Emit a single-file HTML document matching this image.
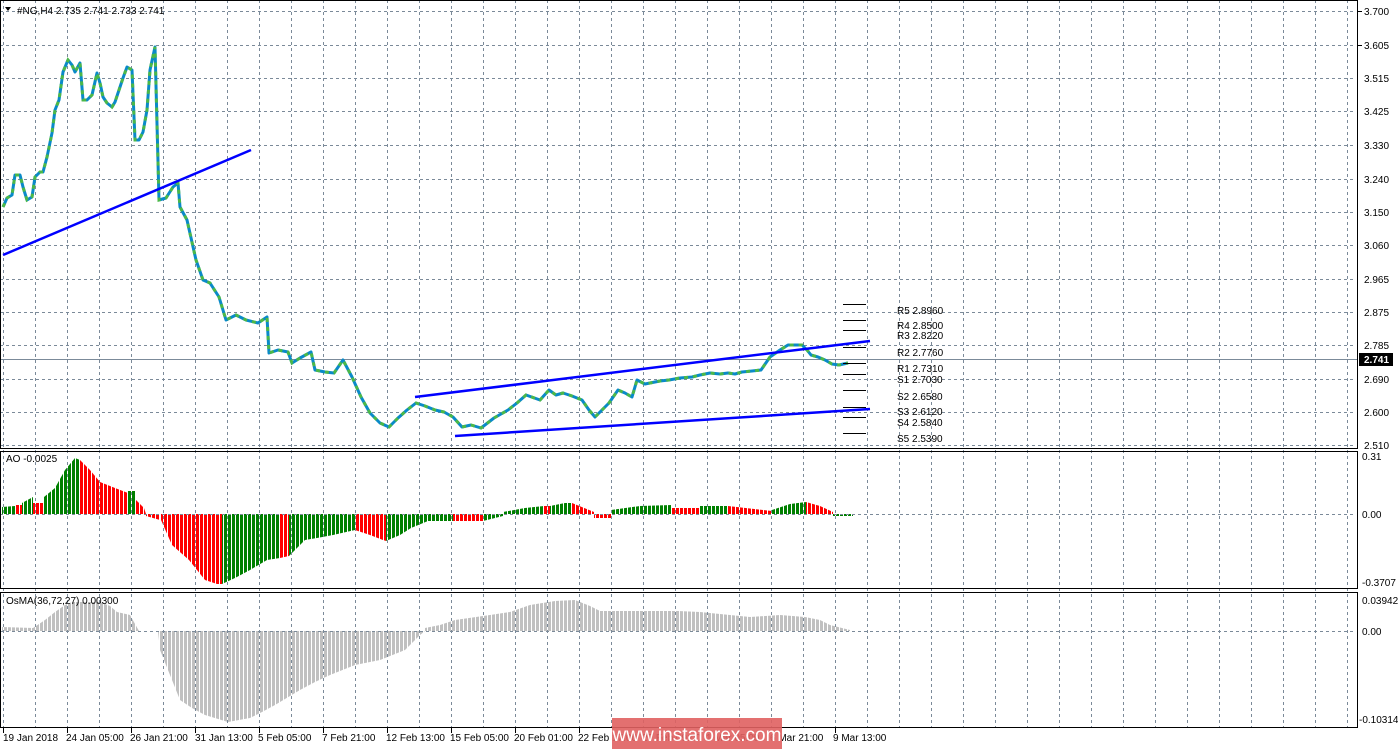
<!DOCTYPE html>
<html><head><meta charset="utf-8"><style>
html,body{margin:0;padding:0;background:#fff;}
svg{display:block;font-family:"Liberation Sans",sans-serif;}
</style></head><body>
<svg width="1398" height="749" viewBox="0 0 1398 749" xmlns="http://www.w3.org/2000/svg">
<defs>
<pattern id="vg" patternUnits="userSpaceOnUse" width="32" height="6" x="0" y="0"><rect x="3" y="0" width="1" height="3" fill="#7b8a99"/></pattern>
<pattern id="st" patternUnits="userSpaceOnUse" width="4" height="10"><rect x="3" y="0" width="1" height="10" fill="#fff"/></pattern>
</defs>
<rect width="1398" height="749" fill="#fff"/>

<g>
<polygon fill="#008000" points="2,514 2,507 15,506 15,514"/>
<polygon fill="#ff0000" points="15,514 15,505 22,505 22,514"/>
<polygon fill="#008000" points="22,514 22,503 33,497 33,514"/>
<polygon fill="#ff0000" points="33,514 33,503 44,503 44,514"/>
<polygon fill="#008000" points="44,514 44,497 55,488 65,470 75,458 80,460 80,514"/>
<polygon fill="#ff0000" points="80,514 80,460 90,470 100,482 115,488 128,493 128,514"/>
<polygon fill="#008000" points="128,514 128,491 136,491 136,514"/>
<polygon fill="#ff0000" points="136,514 136,500 144,508 146,514"/>
<polygon fill="#ff0000" points="146,514 146,516 160,520 160,514"/>
<polygon fill="#ff0000" points="161,514 161,520 172,545 189,560 205,580 217,584 222,584 222,514"/>
<polygon fill="#008000" points="222,514 222,584 235,578 250,570 267,560 280,558 280,514"/>
<polygon fill="#ff0000" points="280,514 280,558 289,556 289,514"/>
<polygon fill="#008000" points="289,514 289,556 295,550 305,540 317,538 333,535 355,530 355,514"/>
<polygon fill="#ff0000" points="355,514 355,530 370,535 383,540 386,541 386,514"/>
<polygon fill="#008000" points="386,514 386,541 400,535 411,528 428,521 453,521 453,514"/>
<polygon fill="#ff0000" points="453,514 453,521 483,521 483,514"/>
<polygon fill="#008000" points="483,514 483,521 503,516 503,514"/>
<polygon fill="#008000" points="503,514 503,512 525,508 544,506 544,514"/>
<polygon fill="#ff0000" points="544,514 544,506 550,506 550,514"/>
<polygon fill="#008000" points="550,514 550,506 565,503 572,503 572,514"/>
<polygon fill="#ff0000" points="572,514 572,503 594,512 594,514"/>
<polygon fill="#ff0000" points="594,514 594,518 611,518 611,514"/>
<polygon fill="#008000" points="611,514 611,510 640,506 672,505 672,514"/>
<polygon fill="#ff0000" points="672,514 672,508 700,508 700,514"/>
<polygon fill="#008000" points="700,514 700,506 728,506 728,514"/>
<polygon fill="#ff0000" points="728,514 728,506 772,511 772,514"/>
<polygon fill="#008000" points="772,514 772,510 790,504 806,502 806,514"/>
<polygon fill="#ff0000" points="806,514 806,502 820,506 833,512 833,514"/>
<polygon fill="#008000" points="833,514 833,516 853,516 853,514"/>
</g>
<polygon fill="#c0c0c0" points="2,631 2,627 33,628 45,620 55,612 65,605 72,602 100,602 110,606 117,612 130,615 139,631 158,631 160,650 172,680 180,700 192,708 205,715 228,722 250,718 262,712 275,705 300,690 315,682 330,675 355,665 380,660 405,650 420,635 425,631 425,628 440,625 455,620 490,615 510,612 530,605 555,601 575,600 590,606 600,611 650,611 678,611 700,612 720,614 750,617 780,615 805,617 820,620 830,625 850,630 850,631"/>
<rect x="0" y="452" width="858" height="136" fill="url(#st)"/>
<rect x="0" y="593" width="858" height="134" fill="url(#st)"/>

<rect x="0" y="0" width="1356" height="728" fill="url(#vg)"/>
<g stroke="#7b8a99" stroke-width="1" stroke-dasharray="3,3">
<line x1="0" x2="1356" y1="11.5" y2="11.5"/><line x1="0" x2="1356" y1="45.5" y2="45.5"/>
<line x1="0" x2="1356" y1="78.5" y2="78.5"/><line x1="0" x2="1356" y1="111.5" y2="111.5"/>
<line x1="0" x2="1356" y1="145.5" y2="145.5"/><line x1="0" x2="1356" y1="179.5" y2="179.5"/>
<line x1="0" x2="1356" y1="212.5" y2="212.5"/><line x1="0" x2="1356" y1="245.5" y2="245.5"/>
<line x1="0" x2="1356" y1="279.5" y2="279.5"/><line x1="0" x2="1356" y1="312.5" y2="312.5"/>
<line x1="0" x2="1356" y1="345.5" y2="345.5"/><line x1="0" x2="1356" y1="379.5" y2="379.5"/>
<line x1="0" x2="1356" y1="412.5" y2="412.5"/><line x1="0" x2="1356" y1="445.5" y2="445.5"/>
<line x1="0" x2="1356" y1="514.5" y2="514.5"/><line x1="0" x2="1356" y1="631.5" y2="631.5"/>
</g>
<line x1="0" x2="1358" y1="359.5" y2="359.5" stroke="#7b8a99"/>

<polyline fill="none" stroke="#0a8ac8" stroke-width="3" stroke-linejoin="round" points="3,207 7,198 12,195 15,175 20,175 23,187 27,200 32,197 35,177 40,172 43,172 47,157 52,133 55,110 59,100 63,72 68,60 72,65 75,72 80,63 83,100 87,100 92,95 97,73 100,83 103,97 107,103 112,107 115,102 119,90 123,78 127,67 132,70 135,140 139,140 143,132 147,110 150,70 155,47 159,200 166,198 173,187 178,183 180,207 187,220 196,260 203,280 210,283 219,297 226,320 236,315 246,320 258,323 267,317 269,353 278,350 288,352 292,363 300,358 311,352 315,370 325,372 334,373 343,360 352,377 361,397 370,413 380,423 389,427 398,418 407,410 416,403 425,406 435,410 444,412 453,417 462,427 471,425 481,428 494,418 508,410 517,403 526,395 540,400 549,390 556,395 563,393 572,396 582,400 589,410 595,417 602,410 609,403 618,390 625,393 632,397 637,380 645,384 650,383 660,381 669,380 680,378 692,377 700,375 710,373 720,374 728,373 735,374 742,372 752,371 761,370 770,357 780,350 788,345 795,345 802,345 807,350 811,355 818,357 825,360 832,364 839,365 848,363"/>
<polyline fill="none" stroke="#4cb848" stroke-width="3" stroke-dasharray="4,5" points="3,207 7,198 12,195 15,175 20,175 23,187 27,200 32,197 35,177 40,172 43,172 47,157 52,133 55,110 59,100 63,72 68,60 72,65 75,72 80,63 83,100 87,100 92,95 97,73 100,83 103,97 107,103 112,107 115,102 119,90 123,78 127,67 132,70 135,140 139,140 143,132 147,110 150,70 155,47 159,200 166,198 173,187 178,183 180,207 187,220 196,260 203,280 210,283 219,297 226,320 236,315 246,320 258,323 267,317 269,353 278,350 288,352 292,363 300,358 311,352 315,370 325,372 334,373 343,360 352,377 361,397 370,413 380,423 389,427 398,418 407,410 416,403 425,406 435,410 444,412 453,417 462,427 471,425 481,428 494,418 508,410 517,403 526,395 540,400 549,390 556,395 563,393 572,396 582,400 589,410 595,417 602,410 609,403 618,390 625,393 632,397 637,380 645,384 650,383 660,381 669,380 680,378 692,377 700,375 710,373 720,374 728,373 735,374 742,372 752,371 761,370 770,357 780,350 788,345 795,345 802,345 807,350 811,355 818,357 825,360 832,364 839,365 848,363"/>

<g stroke="#0000ff" stroke-width="2.5">
<line x1="3" y1="255" x2="251" y2="150"/>
<line x1="415" y1="397" x2="870" y2="341"/>
<line x1="455" y1="436" x2="870" y2="409"/>
</g>

<g stroke="#000" stroke-width="1">
<line x1="843" x2="866" y1="304.5" y2="304.5"/><line x1="843" x2="866" y1="320.5" y2="320.5"/>
<line x1="843" x2="866" y1="330.5" y2="330.5"/><line x1="843" x2="866" y1="347.5" y2="347.5"/>
<line x1="843" x2="866" y1="363.5" y2="363.5"/><line x1="843" x2="866" y1="374.5" y2="374.5"/>
<line x1="843" x2="866" y1="390.5" y2="390.5"/><line x1="843" x2="866" y1="407.5" y2="407.5"/>
<line x1="843" x2="866" y1="417.5" y2="417.5"/><line x1="843" x2="866" y1="433.5" y2="433.5"/>
</g>
<g font-size="10" fill="#000">
<text x="897" y="314">R5 2.8960</text><text x="897" y="329">R4 2.8500</text>
<text x="897" y="339">R3 2.8220</text><text x="897" y="356">R2 2.7760</text>
<text x="897" y="372">R1 2.7310</text><text x="897" y="383">S1 2.7030</text>
<text x="897" y="400">S2 2.6580</text><text x="897" y="415">S3 2.6120</text>
<text x="897" y="426">S4 2.5840</text><text x="897" y="442">S5 2.5390</text>
</g>

<g stroke="#000" stroke-width="1" fill="none">
<rect x="0.5" y="0.5" width="1357" height="448"/>
<rect x="0.5" y="451.5" width="1357" height="137"/>
<rect x="0.5" y="592.5" width="1357" height="135"/>
</g>

<g font-size="10" fill="#000">
<text x="1364" y="15">3.700</text><text x="1364" y="49">3.605</text><text x="1364" y="82">3.515</text>
<text x="1364" y="115">3.425</text><text x="1364" y="149">3.330</text><text x="1364" y="183">3.240</text>
<text x="1364" y="216">3.150</text><text x="1364" y="249">3.060</text><text x="1364" y="283">2.965</text>
<text x="1364" y="316">2.875</text><text x="1364" y="349">2.785</text><text x="1364" y="383">2.690</text>
<text x="1364" y="416">2.600</text><text x="1364" y="449">2.510</text>
<text x="1362" y="460">0.31</text><text x="1362" y="518">0.00</text><text x="1362" y="586">-0.3707</text>
<text x="1362" y="604">0.03942</text><text x="1362" y="635">0.00</text><text x="1359" y="723">-0.10314</text>
</g>
<g stroke="#000"><line x1="1358" x2="1362" y1="11.5" y2="11.5"/><line x1="1358" x2="1362" y1="45.5" y2="45.5"/></g>
<rect x="1359" y="353" width="34" height="13" fill="#000"/>
<text x="1364" y="363" font-size="10" fill="#fff" font-weight="bold">2.741</text>

<polygon points="5,7 11,7 8,11" fill="#000"/>
<text x="17" y="14" font-size="10" fill="#000">#NG,H4  2.735 2.741 2.733 2.741</text>
<text x="6" y="462" font-size="10" fill="#000">AO -0.0025</text>
<text x="6" y="604" font-size="10" fill="#000">OsMA(36,72,27) 0.00300</text>

<g font-size="10" fill="#000">
<text x="3" y="741">19 Jan 2018</text><text x="66" y="741">24 Jan 05:00</text>
<text x="130" y="741">26 Jan 21:00</text><text x="195" y="741">31 Jan 13:00</text>
<text x="258" y="741">5 Feb 05:00</text><text x="322" y="741">7 Feb 21:00</text>
<text x="386" y="741">12 Feb 13:00</text><text x="450" y="741">15 Feb 05:00</text>
<text x="514" y="741">20 Feb 01:00</text><text x="578" y="741">22 Feb 17:00</text>
<text x="642" y="741">27 Feb 09:00</text><text x="706" y="741">1 Mar 05:00</text>
<text x="770" y="741">6 Mar 21:00</text><text x="833" y="741">9 Mar 13:00</text>
</g>
<g stroke="#000"><line x1="3.5" x2="3.5" y1="728" y2="733"/><line x1="67.5" x2="67.5" y1="728" y2="733"/><line x1="131.5" x2="131.5" y1="728" y2="733"/><line x1="195.5" x2="195.5" y1="728" y2="733"/><line x1="259.5" x2="259.5" y1="728" y2="733"/><line x1="323.5" x2="323.5" y1="728" y2="733"/><line x1="387.5" x2="387.5" y1="728" y2="733"/><line x1="451.5" x2="451.5" y1="728" y2="733"/><line x1="515.5" x2="515.5" y1="728" y2="733"/><line x1="579.5" x2="579.5" y1="728" y2="733"/><line x1="835.5" x2="835.5" y1="728" y2="733"/></g>

<rect x="612" y="718" width="170" height="31" fill="#e06060" opacity="0.9"/>
<text x="697" y="741" font-size="19" fill="#fff" text-anchor="middle">www.instaforex.com</text>
</svg>
</body></html>
